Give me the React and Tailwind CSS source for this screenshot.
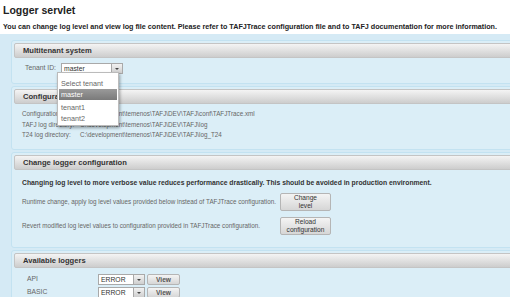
import React from 'react';

const font = { fontFamily: '"Liberation Sans", Arial, sans-serif' };

const PanelHeader = ({ title }) => (
  <div className="mx-[2px] mt-[2px] h-[15px] flex items-center pl-[8px] border border-[#c4c4c4] rounded-[2px] bg-gradient-to-b from-[#f4f4f4] to-[#cdcdcd] text-[7.6px] font-bold text-[#333]">
    {title}
  </div>
);

const Panel = ({ title, children, className = '' }) => (
  <div className={`border border-[#c3e2f1] bg-[#dbeef7] rounded-l-[3px] ${className}`}>
    <PanelHeader title={title} />
    {children}
  </div>
);

const Select = ({ value, width = 'w-[50px]' }) => (
  <div className={`flex h-[11px] ${width} border border-[#a9a9a9] bg-white`}>
    <div className="flex-1 text-[6.8px] leading-[9px] pl-[2px] text-[#333]">{value}</div>
    <div className="w-[11px] border-l border-[#a9a9a9] bg-gradient-to-b from-[#f2f2f2] to-[#cfcfcf] flex items-center justify-center">
      <div className="w-0 h-0 border-l-[2px] border-r-[2px] border-t-[2px] border-l-transparent border-r-transparent border-t-[#444]" />
    </div>
  </div>
);

const Button = ({ children, className = '' }) => (
  <div className={`border border-[#b5b5b5] rounded-[2px] bg-gradient-to-b from-[#f4f4f4] to-[#d6d6d6] text-[6.6px] leading-[8px] text-[#333] text-center flex items-center justify-center ${className}`}>
    {children}
  </div>
);

export default function App() {
  return (
    <div style={font} className="w-[510px] h-[297px] overflow-hidden bg-white">
      <div className="pl-[3px] pt-[4px] text-[10.5px] font-bold text-[#222] leading-[12px]">Logger servlet</div>
      <div className="pl-[3px] pt-[6px] text-[7.2px] font-bold text-[#222] leading-[9px] whitespace-nowrap">
        You can change log level and view log file content. Please refer to TAFJTrace configuration file and to TAFJ documentation for more information.
      </div>
      <div className="mt-[3px] bg-[#d5eaf5] pl-[11px] pt-[6px] flex flex-col gap-[2px] w-[530px]">
        <Panel title="Multitenant system" className="h-[44px] relative">
          <div className="flex items-center pl-[13px] pt-[5px] gap-[5px] text-[6.8px] text-[#666]">
            <span>Tenant ID:</span>
            <Select value="master" width="w-[62px]" />
          </div>
          <div className="absolute left-[45px] top-[31px] z-10 w-[62px] h-[54px] bg-white border border-[#bbb] shadow-[1px_2px_3px_rgba(0,0,0,0.35)] text-[7.2px] text-[#666] pt-[5px]">
            <div className="pl-[3px] h-[11px] leading-[11px]">Select tenant</div>
            <div className="mx-[1px] pl-[2px] h-[11px] leading-[11px] text-white bg-gradient-to-b from-[#9a9a9a] to-[#7a7a7a]">master</div>
            <div className="pl-[3px] h-[12px] leading-[13px] mt-[1px]">tenant1</div>
            <div className="pl-[3px] h-[12px] leading-[12px]">tenant2</div>
          </div>
        </Panel>
        <Panel title="Configuration" className="h-[64px]">
          <div className="pl-[10px] pt-[5px] text-[6.3px] text-[#666] leading-[10.5px]">
            <div className="flex"><span className="w-[58px]">Configuration file:</span><span>C:\development\temenos\TAFJ\DEV\TAFJ\conf\TAFJTrace.xml</span></div>
            <div className="flex"><span className="w-[58px]">TAFJ log directory:</span><span>C:\development\temenos\TAFJ\DEV\TAFJ\log</span></div>
            <div className="flex"><span className="w-[58px]">T24 log directory:</span><span>C:\development\temenos\TAFJ\DEV\TAFJ\log_T24</span></div>
          </div>
        </Panel>
        <Panel title="Change logger configuration" className="h-[96px]">
          <div className="pl-[10px] pt-[8px] text-[6.8px] font-bold text-[#333] leading-[9px] whitespace-nowrap">
            Changing log level to more verbose value reduces performance drastically. This should be avoided in production environment.
          </div>
          <div className="pl-[10px] pt-[6px] flex flex-col gap-[6px] text-[6.3px] text-[#666]">
            <div className="flex items-center">
              <span className="w-[258px] whitespace-nowrap">Runtime change, apply log level values provided below instead of TAFJTrace configuration.</span>
              <Button className="w-[51px] h-[18px]">Change<br />level</Button>
            </div>
            <div className="flex items-center">
              <span className="w-[258px] whitespace-nowrap">Revert modified log level values to configuration provided in TAFJTrace configuration.</span>
              <Button className="w-[51px] h-[18px]">Reload<br />configuration</Button>
            </div>
          </div>
        </Panel>
        <Panel title="Available loggers" className="h-[60px]">
          <div className="pl-[15px] pt-[6px] flex flex-col gap-[2px] text-[6.8px] text-[#666]">
            {['API', 'BASIC'].map((n) => (
              <div key={n} className="flex items-center h-[11px]">
                <span className="w-[71px]">{n}</span>
                <Select value="ERROR" width="w-[47px]" />
                <Button className="ml-[2px] w-[33px] h-[11px] font-bold text-[#555]">View</Button>
              </div>
            ))}
          </div>
        </Panel>
      </div>
    </div>
  );
}
